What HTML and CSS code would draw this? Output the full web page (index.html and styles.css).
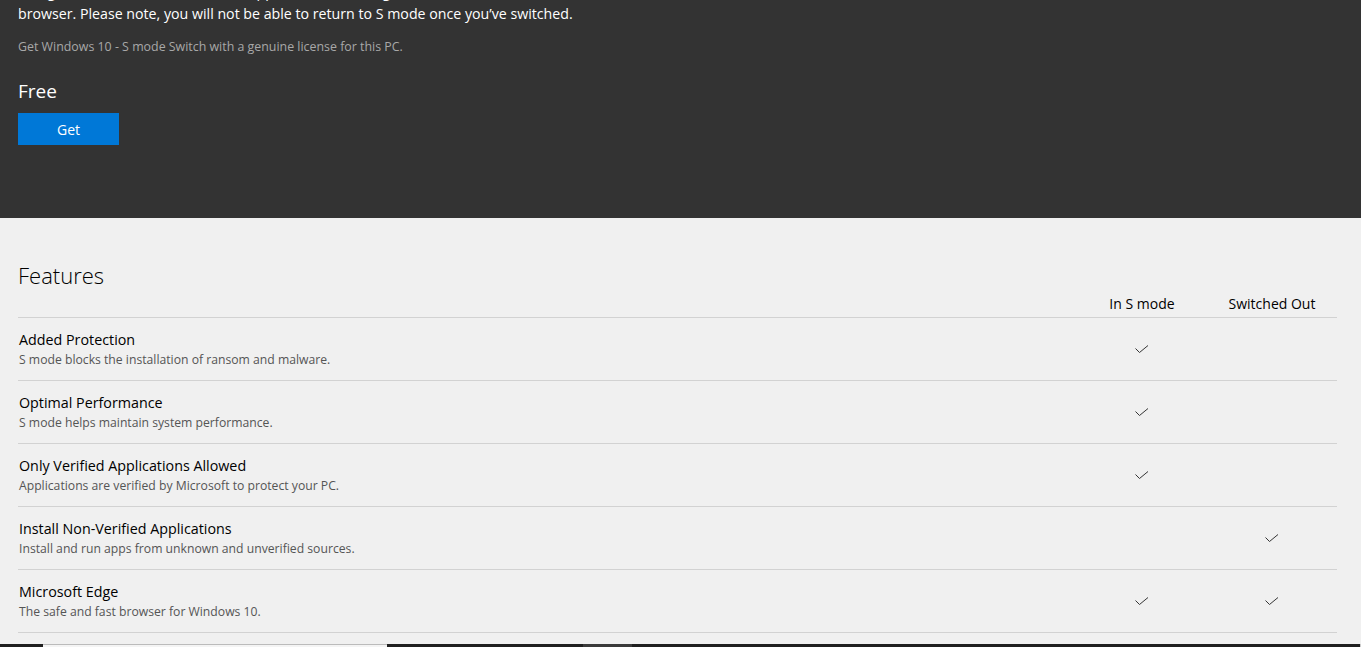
FILE: index.html
```html
<!DOCTYPE html>
<html lang="en">
<head>
<meta charset="utf-8">
<title>Switch out of S mode</title>
<link rel="stylesheet" href="styles.css">
</head>
<body>
<div class="page">
  <section class="hero">
    <p class="lead">Using this switch lets the PC install apps that are missing, and Chrome or Firefox as a<br>browser. Please note, you will not be able to return to S mode once you’ve switched.</p>
    <p class="license">Get Windows 10 - S mode Switch with a genuine license for this PC.</p>
    <div class="price">Free</div>
    <button class="get-btn" type="button">Get</button>
  </section>
  <section class="features">
    <h2 class="features-title">Features</h2>
    <div class="table">
      <div class="row head">
        <div class="cell-main"></div>
        <div class="cell-col">In S mode</div>
        <div class="cell-col">Switched Out</div>
      </div>
      <div class="row">
        <div class="cell-main"><div class="t">Added Protection</div><div class="d">S mode blocks the installation of ransom and malware.</div></div>
        <div class="cell-col"><svg class="chk" viewBox="0 0 14 9"><polyline points="0.5,3.5 4.5,7.5 13,0.5"/></svg></div>
        <div class="cell-col"></div>
      </div>
      <div class="row">
        <div class="cell-main"><div class="t">Optimal Performance</div><div class="d">S mode helps maintain system performance.</div></div>
        <div class="cell-col"><svg class="chk" viewBox="0 0 14 9"><polyline points="0.5,3.5 4.5,7.5 13,0.5"/></svg></div>
        <div class="cell-col"></div>
      </div>
      <div class="row">
        <div class="cell-main"><div class="t">Only Verified Applications Allowed</div><div class="d">Applications are verified by Microsoft to protect your PC.</div></div>
        <div class="cell-col"><svg class="chk" viewBox="0 0 14 9"><polyline points="0.5,3.5 4.5,7.5 13,0.5"/></svg></div>
        <div class="cell-col"></div>
      </div>
      <div class="row">
        <div class="cell-main"><div class="t">Install Non-Verified Applications</div><div class="d">Install and run apps from unknown and unverified sources.</div></div>
        <div class="cell-col"></div>
        <div class="cell-col"><svg class="chk" viewBox="0 0 14 9"><polyline points="0.5,3.5 4.5,7.5 13,0.5"/></svg></div>
      </div>
      <div class="row">
        <div class="cell-main"><div class="t">Microsoft Edge</div><div class="d">The safe and fast browser for Windows 10.</div></div>
        <div class="cell-col"><svg class="chk" viewBox="0 0 14 9"><polyline points="0.5,3.5 4.5,7.5 13,0.5"/></svg></div>
        <div class="cell-col"><svg class="chk" viewBox="0 0 14 9"><polyline points="0.5,3.5 4.5,7.5 13,0.5"/></svg></div>
      </div>
    </div>
  </section>
  <div class="strip">
    <div class="seg-a"></div>
    <div class="seg-b"></div>
    <div class="seg-c"></div>
  </div>
</div>
</body>
</html>
```
FILE: styles.css
```css
html, body {
  margin: 0;
  padding: 0;
  overflow: hidden;
}
body {
  font-family: "Open Sans", "Noto Sans", sans-serif;
  color: #000;
  background: #f0f0f0;
}
.page {
  height: 647px;
  display: flex;
  flex-direction: column;
  overflow: hidden;
}
.hero {
  background: #333333;
  color: #fff;
  padding: 0 18px 73px;
  flex: none;
  height: 218px;
  box-sizing: border-box;
}
.lead {
  margin: -19px 0 0;
  font-size: 14.2px;
  line-height: 22px;
  color: #fff;
}
.license {
  margin: 13px 0 0;
  font-size: 12.4px;
  line-height: 18px;
  color: #a8a8a8;
}
.price {
  margin-top: 22px;
  font-size: 19px;
  line-height: 26px;
  color: #fff;
}
.get-btn {
  margin-top: 9px;
  width: 101px;
  height: 32px;
  border: 0;
  padding: 0;
  background: #0078d7;
  color: #fff;
  font-family: inherit;
  font-size: 14px;
  display: block;
}
.features {
  flex: 1;
  padding: 41px 24px 0 18px;
  background: #f0f0f0;
}
.features-title {
  margin: 0;
  font-size: 22px;
  font-weight: 300;
  line-height: 32px;
}
.row {
  display: grid;
  grid-template-columns: 1fr 130px 130px;
  border-bottom: 1px solid #d2d2d2;
  height: 63px;
  box-sizing: border-box;
  align-items: center;
}
.row.head {
  height: 27px;
  align-items: start;
  padding-top: 3px;
}
.head .cell-col {
  font-size: 14px;
  line-height: 20px;
  text-align: center;
}
.cell-main {
  padding-left: 1px;
}
.cell-col {
  display: flex;
  justify-content: center;
}
.t {
  font-size: 14.3px;
  line-height: 22px;
}
.d {
  font-size: 12.2px;
  line-height: 18px;
  color: #555;
}
.chk {
  width: 14px;
  height: 9px;
  fill: none;
  stroke: #333;
  stroke-width: 1;
}
.strip {
  flex: none;
  height: 3px;
  background: #1f1f1f;
  display: flex;
}
.seg-a {
  margin-left: 43px;
  width: 344px;
  background: #f4f4f4;
  border-top: 1px solid #bbb;
  box-sizing: border-box;
}
.seg-b {
  margin-left: 196px;
  width: 49px;
  background: #3a3a3a;
}
.seg-c {
  margin-left: auto;
  width: 1px;
  background: #ccc;
}
```
